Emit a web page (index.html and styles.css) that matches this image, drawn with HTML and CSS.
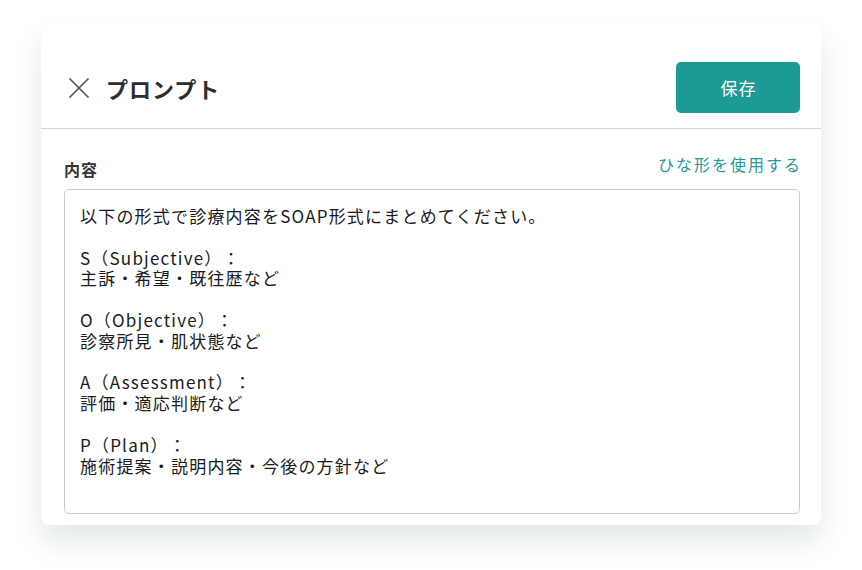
FILE: index.html
```html
<!DOCTYPE html>
<html lang="ja">
<head>
<meta charset="utf-8">
<title>プロンプト</title>
<link rel="stylesheet" href="styles.css">
</head>
<body>
<div class="card">
  <header class="header">
    <button class="close" aria-label="閉じる">
      <svg width="22" height="22" viewBox="0 0 22 22"><path d="M1.5 1.5 L20.5 20.5 M20.5 1.5 L1.5 20.5" stroke="#555" stroke-width="1.7" fill="none"/></svg>
    </button>
    <h1 class="title">プロンプト</h1>
    <button class="save">保存</button>
  </header>
  <section class="content">
    <div class="label-row">
      <span class="label">内容</span>
      <a class="link">ひな形を使用する</a>
    </div>
    <div class="editor">以下の形式で診療内容をSOAP形式にまとめてください。

S（Subjective）：
主訴・希望・既往歴など

O（Objective）：
診察所見・肌状態など

A（Assessment）：
評価・適応判断など

P（Plan）：
施術提案・説明内容・今後の方針など</div>
  </section>
</div>
</body>
</html>
```
FILE: styles.css
```css
html, body {
  margin: 0;
  padding: 0;
  background: #ffffff;
}
body {
  font-family: "Noto Sans CJK JP", "Noto Sans", sans-serif;
  color: #222;
  padding-top: 24px;
  min-height: 570px;
  box-sizing: border-box;
  text-spacing-trim: space-all;
}
.card {
  margin-left: 41px;
  width: 780px;
  background: #fff;
  border-radius: 8px;
  box-shadow: 0 16px 30px rgba(60, 95, 95, 0.14);
  padding-bottom: 11px;
}
.header {
  display: flex;
  align-items: center;
  height: 105px;
  box-sizing: border-box;
  padding: 38px 21px 15px 26px;
  border-bottom: 1px solid #d6d6d6;
}
.close {
  width: 24px;
  height: 24px;
  padding: 0;
  border: 0;
  background: none;
  display: flex;
  align-items: center;
  justify-content: center;
  margin-right: 15px;
}
.title {
  margin: 0;
  font-size: 22px;
  font-weight: 700;
  letter-spacing: 1px;
  color: #2e2e2e;
  flex: 1;
}
.save {
  width: 124px;
  height: 51px;
  border: 0;
  border-radius: 5px;
  background: #1d9a96;
  color: #fff;
  font-family: "Noto Sans CJK JP", sans-serif;
  font-size: 17px;
  letter-spacing: 1px;
  padding: 0 0 0 1px;
}
.content {
  padding: 0 21px 0 23px;
}
.label-row {
  display: flex;
  justify-content: space-between;
  align-items: flex-start;
  height: 40px;
  padding-top: 20px;
}
.label {
  font-size: 16px;
  font-weight: 700;
  letter-spacing: 1px;
  line-height: 26px;
  padding-top: 7px;
  color: #333;
}
.link {
  font-size: 16px;
  letter-spacing: 2px;
  line-height: 32px;
  margin-right: -2px;
  margin-top: -1px;
  color: #24999a;
  cursor: pointer;
}
.editor {
  height: 325px;
  box-sizing: border-box;
  border: 1px solid #cbcbcb;
  border-radius: 5px;
  padding: 16px 15px 0 15px;
  font-size: 17px;
  line-height: 20.8px;
  letter-spacing: 1.2px;
  white-space: pre-wrap;
  color: #1a1a1a;
}
```
